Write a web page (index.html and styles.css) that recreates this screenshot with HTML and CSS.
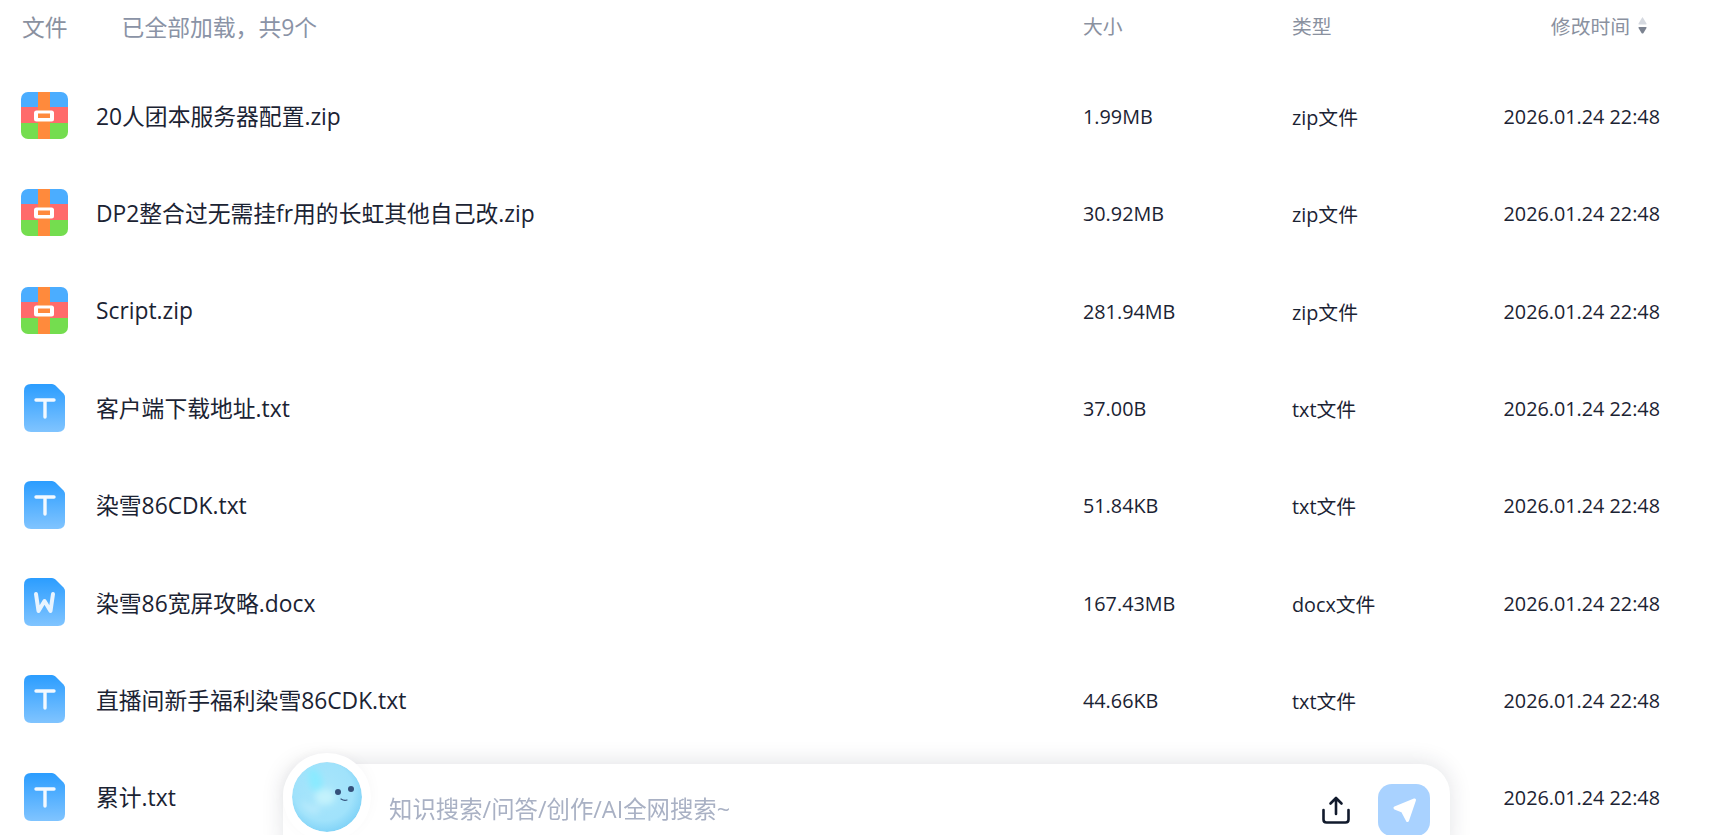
FILE: index.html
```html
<!DOCTYPE html>
<html lang="zh-CN">
<head>
    <meta charset="UTF-8">
    <title>文件</title>
    <link rel="stylesheet" href="styles.css">
</head>
<body>
<svg class="defs">
    <defs>
        <linearGradient id="doc-blue" x1="0" y1="0" x2="0" y2="1">
            <stop offset="0" stop-color="#2b9dff"/>
            <stop offset="1" stop-color="#80c4ff"/>
        </linearGradient>
        <radialGradient id="ball" cx="45%" cy="42%" r="60%">
            <stop offset="0" stop-color="#a9e6fb"/>
            <stop offset="0.7" stop-color="#a0e2fb"/>
            <stop offset="1" stop-color="#7fd2f7"/>
        </radialGradient>
        <filter id="soft"><feGaussianBlur stdDeviation="3"/></filter>
        <symbol id="icon-zip" viewBox="0 0 47 47">
            <clipPath id="zip-clip"><rect width="47" height="47" rx="7"/></clipPath>
            <g clip-path="url(#zip-clip)">
                <rect width="47" height="16" fill="#4badff"/>
                <rect y="15" width="47" height="17" fill="#ff6b6b"/>
                <rect y="31" width="47" height="16" fill="#74dd4f"/>
                <rect x="17" width="12" height="47" fill="#ff8a3c"/>
            </g>
            <rect x="13" y="18.500" width="20" height="11" rx="2.500" fill="#fff"/>
            <rect x="17" y="21.500" width="12" height="4.500" fill="#ff8a3c"/>
        </symbol>
        <symbol id="icon-txt" viewBox="0 0 41 48">
            <path d="M7 0H28Q30 0 31.500 1.500L39.500 9.500Q41 11 41 13V41Q41 48 34 48H7Q0 48 0 41V7Q0 0 7 0Z" fill="url(#doc-blue)"/>
            <path d="M12 16H30M21 16V33" fill="none" stroke="#f3f9ff" stroke-width="3.400" stroke-linecap="round"/>
        </symbol>
        <symbol id="icon-doc" viewBox="0 0 41 48">
            <path d="M7 0H28Q30 0 31.500 1.500L39.500 9.500Q41 11 41 13V41Q41 48 34 48H7Q0 48 0 41V7Q0 0 7 0Z" fill="url(#doc-blue)"/>
            <path d="M12 16L14.500 33L20.500 23L26.500 33L29 16" fill="none" stroke="#e8f4ff" stroke-width="4" stroke-linecap="round" stroke-linejoin="round"/>
        </symbol>
    </defs>
</svg>

<div class="file-list">
    <div class="row head">
        <div class="head-name"><span>文件</span><span class="head-count">已全部加载，共9个</span></div>
        <div class="col-size">大小</div>
        <div class="col-type">类型</div>
        <div class="col-time">修改时间
            <svg class="sort" viewBox="0 0 9 18" width="9" height="18">
                <path d="M4.500 1L8.500 7.500Q8.800 8.500 8 8.500H1Q.2 8.500 .5 7.500Z" fill="#d5d9e0"/>
                <path d="M1 11H8Q8.800 11 8.500 12L5.500 17Q4.500 18 3.500 17L.5 12Q.2 11 1 11Z" fill="#7b8290"/>
            </svg>
        </div>
    </div>

    <div class="row file">
        <div class="file-name"><span class="file-icon"><svg width="47" height="47"><use href="#icon-zip"/></svg></span>20人团本服务器配置.zip</div>
        <div class="col-size">1.99MB</div>
        <div class="col-type">zip文件</div>
        <div class="col-time">2026.01.24 22:48</div>
    </div>
    <div class="row file">
        <div class="file-name"><span class="file-icon"><svg width="47" height="47"><use href="#icon-zip"/></svg></span>DP2整合过无需挂fr用的长虹其他自己改.zip</div>
        <div class="col-size">30.92MB</div>
        <div class="col-type">zip文件</div>
        <div class="col-time">2026.01.24 22:48</div>
    </div>
    <div class="row file">
        <div class="file-name"><span class="file-icon"><svg width="47" height="47"><use href="#icon-zip"/></svg></span>Script.zip</div>
        <div class="col-size">281.94MB</div>
        <div class="col-type">zip文件</div>
        <div class="col-time">2026.01.24 22:48</div>
    </div>
    <div class="row file">
        <div class="file-name"><span class="file-icon"><svg width="41" height="48"><use href="#icon-txt"/></svg></span>客户端下载地址.txt</div>
        <div class="col-size">37.00B</div>
        <div class="col-type">txt文件</div>
        <div class="col-time">2026.01.24 22:48</div>
    </div>
    <div class="row file">
        <div class="file-name"><span class="file-icon"><svg width="41" height="48"><use href="#icon-txt"/></svg></span>染雪86CDK.txt</div>
        <div class="col-size">51.84KB</div>
        <div class="col-type">txt文件</div>
        <div class="col-time">2026.01.24 22:48</div>
    </div>
    <div class="row file">
        <div class="file-name"><span class="file-icon"><svg width="41" height="48"><use href="#icon-doc"/></svg></span>染雪86宽屏攻略.docx</div>
        <div class="col-size">167.43MB</div>
        <div class="col-type">docx文件</div>
        <div class="col-time">2026.01.24 22:48</div>
    </div>
    <div class="row file">
        <div class="file-name"><span class="file-icon"><svg width="41" height="48"><use href="#icon-txt"/></svg></span>直播间新手福利染雪86CDK.txt</div>
        <div class="col-size">44.66KB</div>
        <div class="col-type">txt文件</div>
        <div class="col-time">2026.01.24 22:48</div>
    </div>
    <div class="row file">
        <div class="file-name"><span class="file-icon"><svg width="41" height="48"><use href="#icon-txt"/></svg></span>累计.txt</div>
        <div class="col-size"></div>
        <div class="col-type"></div>
        <div class="col-time">2026.01.24 22:48</div>
    </div>
</div>

<div class="ask-box">
    <svg class="ask-avatar" viewBox="0 0 70 70" width="70" height="70">
        <circle cx="35" cy="35" r="35" fill="url(#ball)"/>
        <g filter="url(#soft)">
            <path d="M16 8C26 4 32 14 30 26C28 32 20 30 17 22Z" fill="#8aeaff"/>
            <ellipse cx="33" cy="35" rx="10" ry="8" fill="#c3f2fc"/>
            <path d="M8 38C18 42 24 46 30 40L26 52C18 54 10 48 8 38Z" fill="#b5e9fc"/>
        </g>
        <circle cx="46" cy="30" r="3" fill="#34507a"/>
        <circle cx="59" cy="27" r="3" fill="#34507a"/>
        <path d="M49 37Q52 39 55 38" fill="none" stroke="#34507a" stroke-width="1.200" stroke-linecap="round"/>
    </svg>
    <div class="ask-input">知识搜索/问答/创作/AI全网搜索~</div>
    <svg class="ask-upload" viewBox="0 0 28 28" width="28" height="28" fill="none" stroke="#111a2c" stroke-width="2.600" stroke-linecap="round" stroke-linejoin="round">
        <path d="M14 18V2M8.500 7.500L14 2L19.500 7.500"/>
        <path d="M1.500 14V23.500Q1.500 26.500 4.500 26.500H23.500Q26.500 26.500 26.500 23.500V14"/>
    </svg>
    <div class="ask-send">
        <svg viewBox="0 0 26 26" width="26" height="26">
            <path d="M23.500 3L4 11L11.500 14L16.500 23.500Z" fill="#fff" stroke="#fff" stroke-width="3" stroke-linejoin="round"/>
        </svg>
    </div>
</div>
</body>
</html>
```

FILE: styles.css
```css
* {
    box-sizing: border-box;
}

html, body {
    height: 100%;
}

body {
    margin: 0;
    background: #ffffff;
    overflow: hidden;
    font-family: 'Open Sans', 'Noto Sans CJK SC', sans-serif;
    color: #1b2333;
}

.defs {
    position: absolute;
    width: 0;
    height: 0;
}

.row {
    display: grid;
    grid-template-columns: 1083px 209px 1fr auto;
    align-items: center;
    padding-right: 56px;
    font-size: 19.800px;
}

.head {
    height: 52px;
    margin-bottom: 15px;
    color: #8a919f;
}

.head-name {
    display: flex;
    gap: 54px;
    padding-left: 22px;
    font-size: 22.800px;
}

.head-count {
    color: #8a93a6;
}

.head .col-size,
.head .col-type,
.head .col-time {
    margin-top: -2px;
}

.file {
    height: 97.300px;
}

.file .col-size,
.file .col-type,
.file .col-time {
    margin-top: 2px;
}

.file-name {
    display: flex;
    align-items: center;
    font-size: 22.800px;
}

.file-icon {
    display: flex;
    justify-content: center;
    width: 96px;
    padding-right: 7px;
}

.col-time {
    display: flex;
    align-items: center;
    justify-content: flex-end;
    gap: 8px;
}

.head .col-time {
    padding-right: 13px;
}

.ask-box {
    position: fixed;
    left: 283px;
    bottom: -30px;
    width: 1167px;
    height: 101px;
    display: flex;
    align-items: flex-start;
    padding: 20px 20px 0 106px;
    background: #ffffff;
    border-radius: 30px;
    box-shadow: 0 -2px 22px rgba(30, 40, 60, 0.13);
}

.ask-avatar {
    position: absolute;
    left: 9px;
    top: -2px;
    border-radius: 50%;
    box-shadow: 0 0 0 9px #ffffff, 0 -3px 20px rgba(30, 40, 60, 0.1);
}

.ask-input {
    flex: 1;
    margin-top: 8px;
    color: #a9b1c4;
    font-size: 23.400px;
    line-height: 34px;
}

.ask-upload {
    margin-top: 12px;
    margin-right: 28px;
}

.ask-send {
    display: flex;
    align-items: center;
    justify-content: center;
    width: 52px;
    height: 52px;
    border-radius: 14px;
    background: #a9d2ff;
}
```
